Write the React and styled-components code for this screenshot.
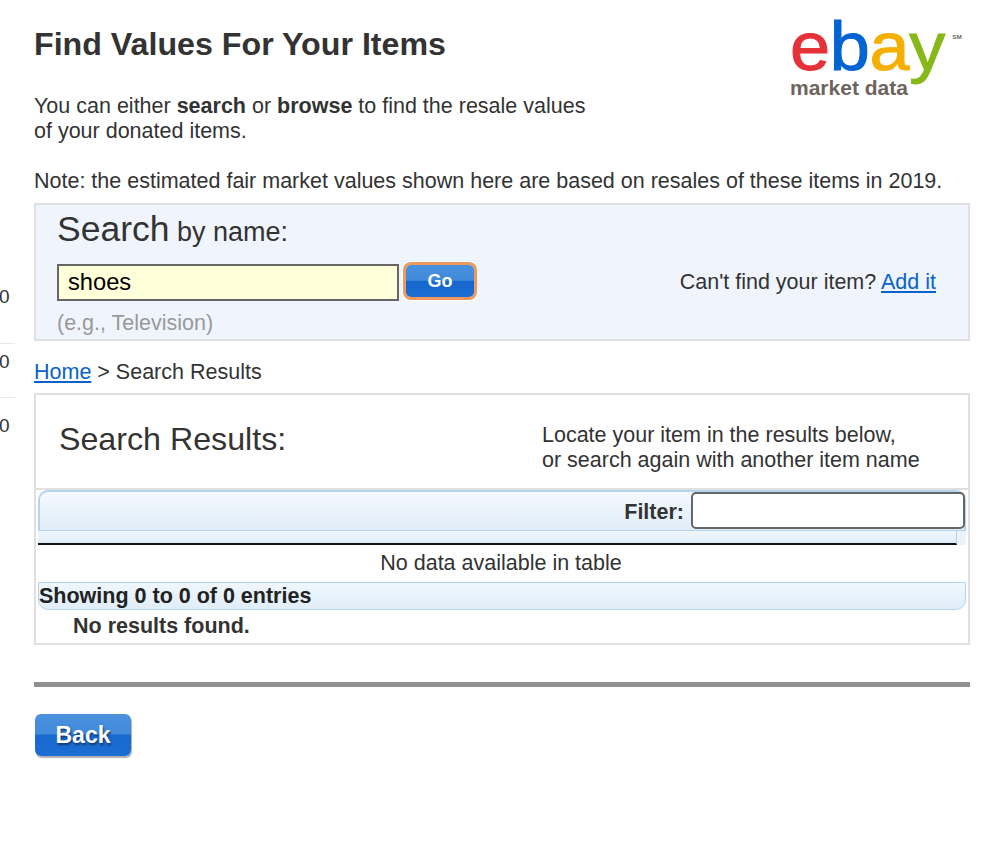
import React from 'react';
import styled, { createGlobalStyle } from 'styled-components';

const GlobalStyle = createGlobalStyle`
  html, body {
    margin: 0;
    padding: 0;
    background: #fff;
    overflow: hidden;
  }
  body {
    font-family: "Liberation Sans", Arial, sans-serif;
    font-size: 21.5px;
    color: #333;
  }
`;

const Page = styled.div`
  display: flex;
  width: 999px;
  height: 854px;
  overflow: hidden;
`;

const Gutter = styled.div`
  width: 34px;
  flex: none;
  padding-top: 285px;
  box-sizing: border-box;
`;

const GutterRow = styled.div`
  width: 16px;
  height: ${(p) => p.$height}px;
  padding-top: ${(p) => p.$top || 0}px;
  font-size: 19px;
  line-height: 24px;
  color: #333;
  margin-left: -1px;
  border-bottom: ${(p) => (p.$line ? '1px solid #e8e8e8' : 'none')};
  box-sizing: border-box;
`;

const Main = styled.div`
  width: 936px;
  flex: none;
`;

const Intro = styled.div`
  position: relative;
  height: 203px;
`;

const IntroText = styled.div`
  padding-top: 25px;
`;

const Title = styled.h1`
  margin: 0 0 31px;
  font-size: 32.2px;
  line-height: 38px;
  font-weight: bold;
  color: #333;
`;

const Para = styled.p`
  margin: 0 0 ${(p) => p.$gap || 0}px;
  line-height: 25px;
  width: ${(p) => p.$width || 'auto'};
  white-space: ${(p) => (p.$nowrap ? 'nowrap' : 'normal')};
`;

// sits over the corner of the intro block
const Logo = styled.div`
  position: absolute;
  top: 13px;
  left: 756px;
  width: 180px;
`;

const LogoWord = styled.div`
  font-size: 68px;
  line-height: 66px;
  letter-spacing: -0.3px;
  margin-bottom: -3px;
  white-space: nowrap;
  position: relative;
  transform: scaleX(1.06);
  transform-origin: left;
  -webkit-text-stroke: 1px currentColor;
`;

const LogoLetter = styled.span`
  color: ${(p) => p.$color};
`;

const LogoSub = styled.div`
  position: relative;
  font-size: 21px;
  line-height: 24px;
  font-weight: bold;
  color: #6d655d;
  white-space: nowrap;
`;

const LogoMark = styled.span`
  position: absolute;
  left: 153px;
  top: 21px;
  font-size: 6px;
  line-height: 6px;
  letter-spacing: 0;
  font-weight: bold;
  color: #666;
  -webkit-text-stroke: 0;
`;

const SearchBox = styled.div`
  height: 138px;
  box-sizing: border-box;
  background: #f0f5fd;
  border: 2px solid #e0e0e0;
  padding: 2px 32px 0 21px;
`;

const SearchHeading = styled.div`
  line-height: 44px;
  font-size: 27px;
  color: #333;
`;

const SearchBig = styled.span`
  font-size: 35.5px;
`;

const SearchRow = styled.div`
  display: flex;
  align-items: center;
  margin-top: 10px;
`;

const SearchInput = styled.input`
  width: 342px;
  height: 37px;
  box-sizing: border-box;
  background: #ffffd9;
  border: 2px solid #666;
  padding: 0 9px;
  font: 23.7px "Liberation Sans", Arial, sans-serif;
  color: #000;
  outline: none;
`;

const GoButton = styled.button`
  width: 68px;
  height: 32px;
  margin-left: 7px;
  margin-top: -3px;
  border: none;
  border-radius: 5px;
  background: linear-gradient(#4a90de 0%, #3f8adb 48%, #1668cf 50%, #1b6dd2 100%);
  box-shadow: 0 0 0 3px #ef9a5c, 0 0 0 4px #fff;
  color: #fff;
  font: bold 18px "Liberation Sans", Arial, sans-serif;
  padding: 0;
`;

const NotFound = styled.div`
  margin-left: auto;
  white-space: nowrap;
`;

const Anchor = styled.a`
  color: #0a62cc;
  text-decoration: underline;
`;

const Hint = styled.div`
  color: #999;
  margin-top: 10px;
  line-height: 24px;
`;

const Crumbs = styled.div`
  height: 52px;
  line-height: 62px;
  box-sizing: border-box;
`;

const ResultsBox = styled.div`
  height: 252px;
  box-sizing: border-box;
  border: 2px solid #e0e0e0;
  padding: 0 2px;
`;

const ResultsHead = styled.div`
  display: flex;
  height: 93px;
  border-bottom: 2px solid #e0e0e0;
  margin: 0 -2px;
`;

const ResultsTitle = styled.div`
  width: 506px;
  padding: 24px 0 0 23px;
  font-size: 32.2px;
  line-height: 40px;
  box-sizing: border-box;
`;

const ResultsNote = styled.div`
  padding-top: 28px;
  line-height: 25px;
`;

const TableTop = styled.div`
  display: flex;
  justify-content: flex-end;
  align-items: center;
  height: 42px;
  box-sizing: border-box;
  background: linear-gradient(#f4f9fe, #e0edf8);
  border: 2px solid #b4d3ef;
  border-radius: 10px 10px 0 0;
  font-weight: bold;
  gap: 7px;
`;

const FilterLabel = styled.span`
  margin-top: 2px;
`;

const FilterInput = styled.input`
  width: 274px;
  height: 37px;
  margin: 0 -1px 2px 0;
  box-sizing: border-box;
  background: #fff;
  border: 2px solid #666;
  border-radius: 5px;
  outline: none;
`;

const HeadStrip = styled.div`
  background: #eaf3fb;
  height: 14px;
  margin-top: -1px;
`;

const HeadStripCell = styled.div`
  width: 919px;
  height: 14px;
  box-sizing: border-box;
  background: linear-gradient(#f0f7fd, #dfedf8);
  border-right: 1px solid #b4d3ef;
  border-bottom: 2px solid #111;
`;

const EmptyRow = styled.div`
  height: 37px;
  line-height: 37px;
  text-align: center;
  padding-right: 2px;
`;

const TableFoot = styled.div`
  height: 28px;
  box-sizing: border-box;
  background: linear-gradient(#f0f7fd, #e0edf8);
  border: 1px solid #b4d3ef;
  border-radius: 0 0 10px 10px;
  line-height: 27px;
  font-weight: bold;
  color: #222;
  white-space: nowrap;
`;

const NoResults = styled.div`
  padding: 4px 0 0 35px;
  line-height: 24px;
  font-weight: bold;
`;

const Rule = styled.div`
  height: 5px;
  background: #919191;
  margin-top: 37px;
`;

const BackButton = styled.button`
  display: block;
  width: 96px;
  height: 42px;
  margin: 27px 0 0 1px;
  border: none;
  border-radius: 6px;
  background: linear-gradient(#4b91de 0%, #418bdb 48%, #1769d0 50%, #1c6ed2 100%);
  box-shadow: 1px 2px 1px #b0b0b0;
  color: #fff;
  font: bold 23px "Liberation Sans", Arial, sans-serif;
  text-shadow: 1px 2px 2px #123a70;
  padding: 0;
`;

const App = () => (
  <>
    <GlobalStyle />
    <Page>
      <Gutter>
        <GutterRow $height={59} $line>0</GutterRow>
        <GutterRow $height={54} $line $top={6}>0</GutterRow>
        <GutterRow $height={40} $top={16}>0</GutterRow>
      </Gutter>
      <Main>
        <Intro>
          <IntroText>
            <Title>Find Values For Your Items</Title>
            <Para $gap={25} $width="570px">
              You can either <b>search</b> or <b>browse</b> to find the resale values
              of your donated items.
            </Para>
            <Para $nowrap>
              Note: the estimated fair market values shown here are based on resales of these items in 2019.
            </Para>
          </IntroText>
          <Logo>
            <LogoWord>
              <LogoLetter $color="#e53238">e</LogoLetter>
              <LogoLetter $color="#0064d2">b</LogoLetter>
              <LogoLetter $color="#f5af02">a</LogoLetter>
              <LogoLetter $color="#86b817">y</LogoLetter>
              <LogoMark>SM</LogoMark>
            </LogoWord>
            <LogoSub>market data</LogoSub>
          </Logo>
        </Intro>

        <SearchBox>
          <SearchHeading>
            <SearchBig>Search</SearchBig> by name:
          </SearchHeading>
          <SearchRow>
            <SearchInput defaultValue="shoes" />
            <GoButton>Go</GoButton>
            <NotFound>
              Can't find your item? <Anchor href="#">Add it</Anchor>
            </NotFound>
          </SearchRow>
          <Hint>(e.g., Television)</Hint>
        </SearchBox>

        <Crumbs>
          <Anchor href="#">Home</Anchor> &gt; Search Results
        </Crumbs>

        <ResultsBox>
          <ResultsHead>
            <ResultsTitle>Search Results:</ResultsTitle>
            <ResultsNote>
              Locate your item in the results below,
              <br />
              or search again with another item name
            </ResultsNote>
          </ResultsHead>
          <TableTop>
            <FilterLabel>Filter:</FilterLabel>
            <FilterInput />
          </TableTop>
          <HeadStrip>
            <HeadStripCell />
          </HeadStrip>
          <EmptyRow>No data available in table</EmptyRow>
          <TableFoot>Showing 0 to 0 of 0 entries</TableFoot>
          <NoResults>No results found.</NoResults>
        </ResultsBox>

        <Rule />
        <BackButton>Back</BackButton>
      </Main>
    </Page>
  </>
);

export default App;
